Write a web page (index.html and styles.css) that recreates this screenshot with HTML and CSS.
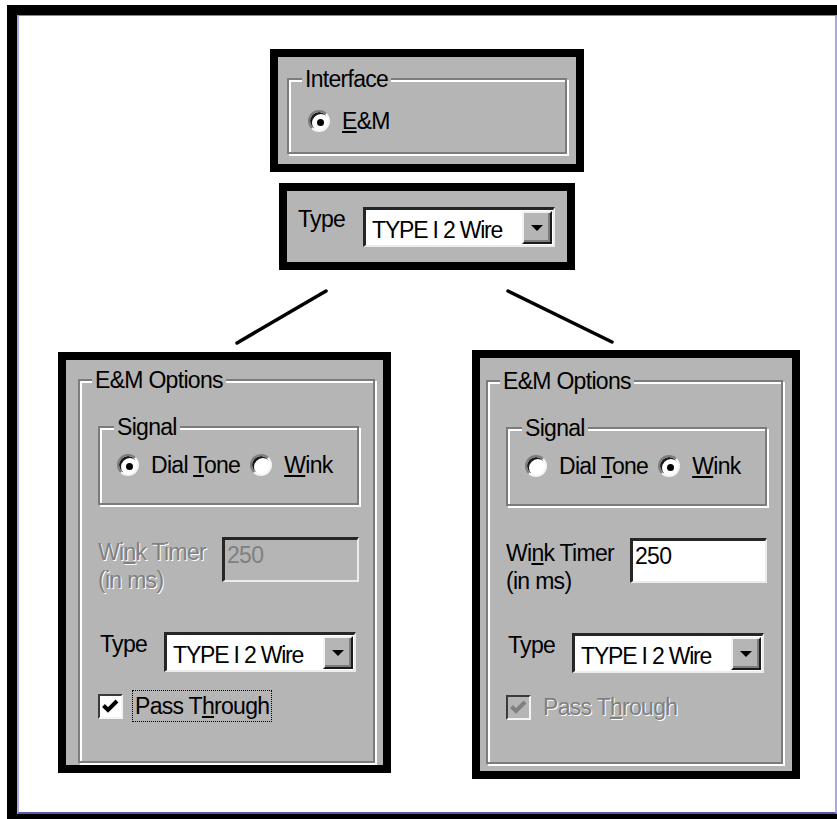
FILE: index.html
```html
<!DOCTYPE html>
<html lang="en">
<head>
    <meta charset="UTF-8">
    <meta name="viewport" content="width=device-width, initial-scale=1.0">
    <title>E&amp;M Interface Options</title>
    <link rel="stylesheet" href="styles.css">
</head>
<body>

    <div class="frame">
        <div class="canvas">

            <!-- Interface selector -->
            <div class="box box-iface">
                <fieldset class="group group-iface">
                    <legend>Interface</legend>
                    <div class="opt-row">
                        <span class="opt"><span class="radio on"></span><span><u>E</u>&amp;M</span></span>
                    </div>
                </fieldset>
            </div>

            <!-- Type selector -->
            <div class="box box-type">
                <span class="label">Type</span>
                <div class="select">
                    <span class="select-value">TYPE I 2 Wire</span>
                    <span class="select-btn"><span class="arrow"></span></span>
                </div>
            </div>

            <svg class="links" width="816" height="80" viewBox="0 0 816 80">
                <line x1="307" y1="21" x2="218" y2="73" />
                <line x1="489" y1="21" x2="593" y2="72" />
            </svg>

            <div class="panels">

                <!-- Dial tone variant -->
                <div class="box panel panel-left">
                    <fieldset class="group group-options">
                        <legend>E&amp;M Options</legend>
                        <fieldset class="group group-signal">
                            <legend>Signal</legend>
                            <div class="opt-row">
                                <span class="opt"><span class="radio on"></span><span>Dial <u>T</u>one</span></span>
                                <span class="opt"><span class="radio"></span><span><u>W</u>ink</span></span>
                            </div>
                        </fieldset>
                        <div class="field-row">
                            <span class="field-label off">Wi<u>n</u>k Timer<br>(in ms)</span>
                            <span class="field field-off">250</span>
                        </div>
                        <div class="type-row">
                            <span class="label">Type</span>
                            <div class="select">
                                <span class="select-value">TYPE I 2 Wire</span>
                                <span class="select-btn"><span class="arrow"></span></span>
                            </div>
                        </div>
                        <div class="check-row">
                            <span class="check">
                                <svg width="21" height="21" viewBox="0 0 21 21"><path d="M3.5 9.5 L8 14 L17 5" /></svg>
                            </span>
                            <span class="check-label focus">Pass T<u>h</u>rough</span>
                        </div>
                    </fieldset>
                </div>

                <!-- Wink variant -->
                <div class="box panel panel-right">
                    <fieldset class="group group-options">
                        <legend>E&amp;M Options</legend>
                        <fieldset class="group group-signal">
                            <legend>Signal</legend>
                            <div class="opt-row">
                                <span class="opt"><span class="radio"></span><span>Dial <u>T</u>one</span></span>
                                <span class="opt"><span class="radio on"></span><span><u>W</u>ink</span></span>
                            </div>
                        </fieldset>
                        <div class="field-row">
                            <span class="field-label">Wi<u>n</u>k Timer<br>(in ms)</span>
                            <span class="field">250</span>
                        </div>
                        <div class="type-row">
                            <span class="label">Type</span>
                            <div class="select">
                                <span class="select-value">TYPE I 2 Wire</span>
                                <span class="select-btn"><span class="arrow"></span></span>
                            </div>
                        </div>
                        <div class="check-row">
                            <span class="check check-off">
                                <svg width="21" height="21" viewBox="0 0 21 21"><path d="M3.5 9.5 L8 14 L17 5" /></svg>
                            </span>
                            <span class="check-label off">Pass T<u>h</u>rough</span>
                        </div>
                    </fieldset>
                </div>

            </div>
        </div>
    </div>

</body>
</html>
```

FILE: styles.css
```css
/* Scaled-up Windows dialog look */
body {
    margin: 0;
    background-color: #fff;
    font-family: "Liberation Sans", Arial, sans-serif;
    font-size: 23px;
    letter-spacing: -0.7px;
    line-height: 24px;
    color: #000;
}
.frame {
    margin: 5px 0 0 7px;
    border: 10px solid #000;
    border-right: 0;
}
.canvas {
    box-sizing: border-box;
    height: 799px;
    overflow: hidden;
    background-color: #fff;
    border-top: 1px solid #8a8a8a;
    border-left: 2px solid #a9a9e6;
    border-right: 2px solid #a9a9e6;
    border-bottom: 2px solid #5a5aa8;
}

/* grey blocks with heavy black outline */
.box {
    box-sizing: border-box;
    background-color: #b5b5b5;
    border: 8px solid #000;
}
.box-iface {
    width: 314px;
    margin: 33px auto 0;
    padding: 10px 9px;
}
.box-type {
    display: flex;
    align-items: flex-start;
    gap: 18px;
    width: 296px;
    margin: 11px auto 0;
    padding: 16px 11px 15px;
}
.links {
    display: block;
}
.links line {
    stroke: #000;
    stroke-width: 3.5;
    stroke-linecap: round;
}
.panels {
    display: flex;
    justify-content: space-between;
    align-items: flex-start;
    padding: 0 35px 0 39px;
}
.panel-left {
    width: 333px;
    margin-top: 2px;
    padding: 8px 8px 2px 12px;
}
.panel-right {
    width: 328px;
    padding: 11px 9px 7px 6px;
}

/* etched group boxes */
.group {
    margin: 0;
    min-width: 0;
    border: 2px solid #7c7c7c;
    box-shadow: inset 2px 2px 0 #fff, 2px 2px 0 #fff;
}
.group legend {
    padding: 0 3px;
    margin-left: -6px;
    line-height: 24px;
    background-color: #b5b5b5;
}
.group-iface {
    box-sizing: border-box;
    width: 280px;
    padding: 18px 0 19px 19px;
}
.group-options {
    padding: 23px 14px 39px 18px;
}
.group-signal {
    padding: 14px 0 26px 17px;
}
.group-signal legend {
    margin-left: -3px;
}

/* radio buttons */
.opt-row {
    display: flex;
    align-items: center;
    gap: 10px;
    height: 24px;
}
.opt {
    display: flex;
    align-items: center;
    gap: 12px;
}
.radio {
    display: flex;
    align-items: center;
    justify-content: center;
    flex: none;
    box-sizing: border-box;
    width: 22px;
    height: 22px;
    border-radius: 50%;
    border: 2px solid;
    border-color: #7c7c7c #f4f4f4 #f4f4f4 #7c7c7c;
    box-shadow: inset 2px 2px 0 #1a1a1a;
    background-color: #fff;
}
.radio.on::after {
    content: "";
    width: 7px;
    height: 7px;
    margin: 2px 0 0 2px;
    border-radius: 50%;
    background-color: #000;
}

/* drop-down */
.select {
    display: flex;
    box-sizing: border-box;
    width: 192px;
    height: 40px;
    padding: 1px 1px 1px 0;
    background-color: #fff;
    border-style: solid;
    border-width: 3px 2px 2px 3px;
    border-color: #262626 #ececec #ececec #262626;
}
.select-value {
    flex: 1;
    padding: 7px 0 0 6px;
    font-size: 23px;
    letter-spacing: -1.2px;
    white-space: nowrap;
    overflow: hidden;
}
.select-btn {
    display: flex;
    align-items: center;
    justify-content: center;
    box-sizing: border-box;
    width: 30px;
    background-color: #b5b5b5;
    border: 2px solid;
    border-color: #f2f2f2 #1a1a1a #1a1a1a #f2f2f2;
    box-shadow: inset -2px -2px 0 #7c7c7c;
}
.arrow {
    width: 0;
    height: 0;
    border-left: 6px solid transparent;
    border-right: 6px solid transparent;
    border-top: 6px solid #000;
}

/* wink timer */
.field-row {
    display: flex;
    align-items: flex-start;
    margin-top: 33px;
}
.field-label {
    width: 124px;
    flex: none;
    line-height: 28px;
}
.field {
    box-sizing: border-box;
    width: 138px;
    height: 45px;
    margin-top: -1px;
    padding: 3px 0 0 2px;
    background-color: #fff;
    border-style: solid;
    border-width: 3px 2px 2px 3px;
    border-color: #262626 #ececec #ececec #262626;
}
.field-off {
    background-color: #b5b5b5;
    color: #808080;
}

.type-row {
    display: flex;
    align-items: flex-start;
    gap: 17px;
    margin-top: 38px;
}
.type-row .label {
    margin-left: 2px;
}

/* check box */
.check-row {
    display: flex;
    align-items: center;
    gap: 9px;
    margin-top: 18px;
}
.check {
    display: flex;
    flex: none;
    box-sizing: border-box;
    width: 25px;
    height: 25px;
    border: 2px solid;
    border-color: #3a3a3a #f4f4f4 #f4f4f4 #3a3a3a;
    background-color: #fff;
}
.check path {
    fill: none;
    stroke: #000;
    stroke-width: 4;
}
.check-off {
    background-color: #b5b5b5;
}
.check-off path {
    stroke: #808080;
}
.check-label {
    padding: 3px 2px;
    border: 1px dotted transparent;
    white-space: nowrap;
}
.check-label.focus {
    border-color: #000;
}

.off {
    color: #808080;
    text-shadow: 1px 1px 0 #fff;
}
```
